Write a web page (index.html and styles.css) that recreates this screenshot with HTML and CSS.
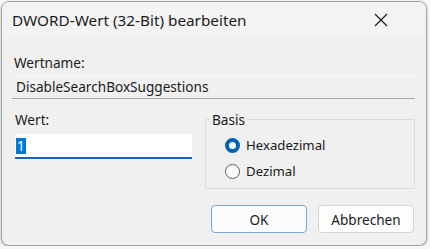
FILE: index.html
```html
<!DOCTYPE html>
<html lang="de">
<head>
    <meta charset="UTF-8">
    <title>DWORD-Wert (32-Bit) bearbeiten</title>
    <link rel="stylesheet" href="styles.css">
</head>
<body>
    <div class="window">
        <div class="titlebar">
            <span class="title">DWORD-Wert (32-Bit) bearbeiten</span>
            <span class="close">
                <svg width="14" height="14" viewBox="0 0 14 14">
                    <path d="M1 1 L13 13 M13 1 L1 13" stroke="#1a1a1a" stroke-width="1.2" fill="none"/>
                </svg>
            </span>
        </div>

        <div class="content">
            <div class="label">Wertname:</div>
            <div class="name-field">DisableSearchBoxSuggestions</div>

            <div class="row">
                <div class="value-col">
                    <div class="label">Wert:</div>
                    <div class="value-field"><span class="selected">1</span></div>
                </div>

                <div class="basis">
                    <span class="legend">Basis</span>
                    <div class="radio">
                        <span class="dot checked"></span>
                        <span>Hexadezimal</span>
                    </div>
                    <div class="radio">
                        <span class="dot"></span>
                        <span>Dezimal</span>
                    </div>
                </div>
            </div>

            <div class="buttons">
                <button class="btn default">OK</button>
                <button class="btn">Abbrechen</button>
            </div>
        </div>
    </div>
</body>
</html>
```

FILE: styles.css
```css
body {
    margin: 0;
    padding: 1px 0 0 1px;
    background: #f7f7f7;
    font-family: "Noto Sans", "Open Sans", sans-serif;
    color: #1b1b1b;
}

.window {
    width: 424px;
    height: 243px;
    border: 1px solid #a3a3a3;
    border-radius: 8px;
    background: #f0f0f0;
    box-shadow: 0 1px 3px rgba(0, 0, 0, 0.25);
    overflow: hidden;
}

.titlebar {
    height: 36px;
    display: flex;
    align-items: center;
    padding-left: 10px;
    background: #f3f3f3;
}

.title {
    font-size: 15.3px;
}

.close {
    margin-left: auto;
    margin-right: 38px;
    display: flex;
}

.content {
    padding: 16px 11px 0 10px;
}

.label {
    font-size: 13.6px;
    padding-left: 2px;
    line-height: 18px;
}

.name-field {
    margin-top: 3px;
    height: 22px;
    line-height: 22px;
    padding-left: 4px;
    font-size: 13.6px;
    background: #f0f0f0;
    border-top: 1px solid #f8f8f8;
    border-bottom: 1px solid #a8a8a8;
}

.row {
    display: flex;
    margin-top: 12px;
}

.value-col {
    width: 180px;
}

.value-col .label {
    padding-left: 3px;
}

.value-field {
    margin: 5px 0 0 3px;
    height: 23px;
    background: #ffffff;
    border-bottom: 2px solid #1064c0;
    display: flex;
    align-items: center;
    padding-left: 1px;
    font-size: 13.6px;
}

.selected {
    background: #0078d7;
    color: #ffffff;
    padding: 0 1px;
    line-height: 16px;
}

.basis {
    position: relative;
    margin: 8px 0 0 13px;
    width: 210px;
    height: 70px;
    border: 1px solid #dcdcdc;
    border-radius: 2px;
    box-sizing: border-box;
    padding-top: 16px;
    padding-left: 19px;
}

.legend {
    position: absolute;
    top: -10px;
    left: 4px;
    padding: 0 2px;
    background: #f0f0f0;
    font-size: 13.6px;
}

.radio {
    display: flex;
    align-items: center;
    gap: 6px;
    font-size: 13.2px;
    height: 18px;
    margin-bottom: 8px;
}

.dot {
    width: 15px;
    height: 15px;
    border-radius: 50%;
    border: 1px solid #5e5e5e;
    background: #fafafa;
    box-sizing: border-box;
}

.dot.checked {
    border: 4px solid #0063b8;
    background: #ffffff;
}

.buttons {
    display: flex;
    justify-content: flex-end;
    gap: 11px;
    margin-top: 16px;
    padding-right: 1px;
}

.btn {
    width: 96px;
    height: 28px;
    font-family: inherit;
    font-size: 13.6px;
    color: #1b1b1b;
    background: #fdfdfd;
    border: 1px solid #d5d5d5;
    border-radius: 4px;
}

.btn.default {
    border-color: #7fa6cb;
    background: #fbfbfb;
}
```
